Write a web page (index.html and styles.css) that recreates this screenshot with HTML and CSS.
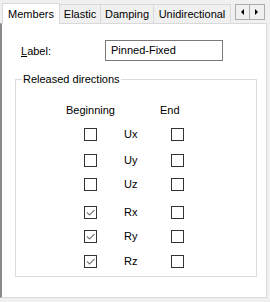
FILE: index.html
```html
<!DOCTYPE html>
<html lang="en">
<head>
    <meta charset="UTF-8">
    <title>Members</title>
    <link rel="stylesheet" href="styles.css">
</head>
<body>
    <div class="tabs">
        <div class="tab active w-members">Members</div>
        <div class="tab w-elastic">Elastic</div>
        <div class="tab w-damping">Damping</div>
        <div class="tab w-unidir">Unidirectional</div>
        <div class="scroller">
            <span class="arrow left"></span>
            <span class="arrow right"></span>
        </div>
    </div>
    <div class="panel">
        <div class="field">
            <span class="field-label"><u>L</u>abel:</span>
            <div class="textbox">Pinned-Fixed</div>
        </div>
        <fieldset class="group">
            <legend>Released directions</legend>
            <div class="grid">
                <span class="head">Beginning</span>
                <span></span>
                <span class="head end">End</span>

                <span class="box"></span><span class="dir">Ux</span><span class="box"></span>
                <span class="box"></span><span class="dir">Uy</span><span class="box"></span>
                <span class="box"></span><span class="dir">Uz</span><span class="box"></span>

                <span class="box checked"><svg viewBox="0 0 11 11"><path d="M2 5.5 L4.5 8 L9.5 3"/></svg></span><span class="dir">Rx</span><span class="box"></span>
                <span class="box checked"><svg viewBox="0 0 11 11"><path d="M2 5.5 L4.5 8 L9.5 3"/></svg></span><span class="dir">Ry</span><span class="box"></span>
                <span class="box checked"><svg viewBox="0 0 11 11"><path d="M2 5.5 L4.5 8 L9.5 3"/></svg></span><span class="dir">Rz</span><span class="box"></span>
            </div>
        </fieldset>
    </div>
</body>
</html>
```

FILE: styles.css
```css
body {
    margin: 0;
    width: 270px;
    height: 302px;
    background: #f0f0f0;
    font-family: "Liberation Sans", Arial, sans-serif;
    font-size: 11px;
    color: #000;
    overflow: hidden;
}

.tabs {
    display: flex;
    align-items: flex-end;
    height: 23px;
    padding-left: 2px;
    padding-top: 2px;
    box-sizing: border-box;
}
.tab {
    height: 19px;
    line-height: 18px;
    text-align: center;
    background: #f0f0f0;
    border: 1px solid #d9d9d9;
    border-bottom: none;
    border-left: none;
    box-sizing: border-box;
}
.tab.active {
    height: 21px;
    line-height: 20px;
    background: #fff;
    border-left: 1px solid #d9d9d9;
    position: relative;
    top: 1px;
}
.w-members { width: 58px; }
.w-elastic { width: 41px; }
.w-damping { width: 53px; }
.w-unidir { width: 77px; }

.scroller {
    display: flex;
    margin-left: 4px;
    align-self: flex-start;
    margin-top: 2px;
}
.arrow {
    width: 15px;
    height: 16px;
    box-sizing: border-box;
    border: 1px solid #adadad;
    background: #f0f0f0;
    position: relative;
}
.arrow + .arrow {
    border-left: none;
}
.arrow::after {
    content: "";
    position: absolute;
    top: 4px;
    border-top: 3px solid transparent;
    border-bottom: 3px solid transparent;
}
.arrow.left::after {
    left: 5px;
    border-right: 3px solid #000;
}
.arrow.right::after {
    left: 5px;
    border-left: 3px solid #000;
}

.panel {
    height: 275px;
    width: 267px;
    background: #fff;
    border: 1px solid #d9d9d9;
    border-left: 2px solid #8a8a8a;
    box-sizing: border-box;
    padding: 16px 9px 0 13px;
}

.field {
    display: flex;
    align-items: center;
}
.field-label {
    width: 84px;
    padding-left: 6px;
}
.textbox {
    width: 118px;
    height: 21px;
    line-height: 19px;
    border: 1px solid #7a7a7a;
    box-sizing: border-box;
    padding-left: 5px;
}

.group {
    margin: 12px 0 0 0;
    padding: 19px 0 0 0;
    height: 204px;
    box-sizing: border-box;
    border: 1px solid #dcdcdc;
}
.group legend {
    padding: 0 1px;
    margin-left: 6px;
}

.grid {
    display: grid;
    grid-template-columns: 61px 36px 41px;
    grid-template-rows: 24px 26px 24px 28px 24px 25px 13px;
    margin-left: 44px;
    align-items: start;
    justify-items: center;
}
.head {
    line-height: 13px;
}
.head.end {
    justify-self: start;
    padding-left: 3px;
}
.dir {
    justify-self: start;
    padding-left: 3px;
    line-height: 13px;
}
.box {
    width: 13px;
    height: 13px;
    box-sizing: border-box;
    border: 1px solid #333;
    background: #fff;
}
.box svg {
    display: block;
    width: 11px;
    height: 11px;
    fill: none;
    stroke: #7a7a7a;
    stroke-width: 1.1;
}
```
